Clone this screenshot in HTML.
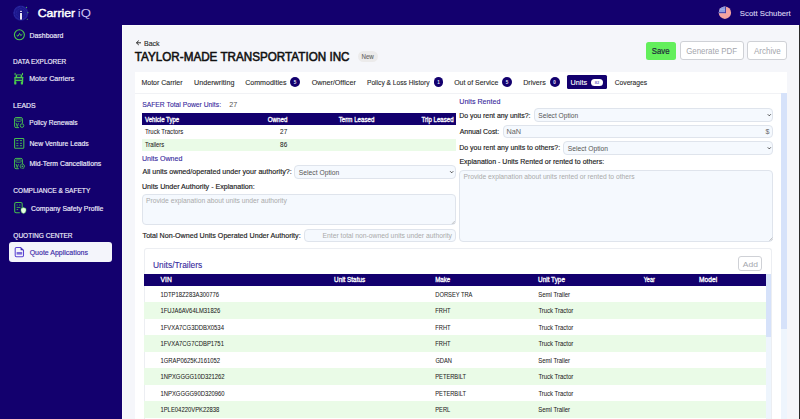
<!DOCTYPE html>
<html><head><meta charset="utf-8">
<title>Carrier iQ - Units</title>
<style>
*{box-sizing:border-box;margin:0;padding:0}
html,body{width:800px;height:419px;overflow:hidden}
body{background:#13006e;font-family:"Liberation Sans",sans-serif;position:relative}
.b{position:absolute}
#main{left:122px;top:25px;width:677px;height:394px;background:#f5f6fa;border-top:1px solid #fbfbfd;border-left:1px solid #fbfbfd}
#edge{left:799px;top:25px;width:1px;height:394px;background:#2a2a2a}
.card{background:#fff}
.badge{background:#13006e;border-radius:5px}
.inp{background:#f5f9fe;border:1px solid #dfe4ec;border-radius:4px}
.th{background:#13006e}
.green{background:#eafbe7}
.btn{background:#fff;border:1px solid #cfd1d6;border-radius:3px}
svg.ov{position:absolute;left:0;top:0;width:800px;height:419px;font-family:"Liberation Sans",sans-serif}
</style></head>
<body>
<!-- ======= SIDEBAR ======= -->
<nav class="b" style="left:0;top:0;width:122px;height:419px">
  <div class="b" style="left:8.6px;top:241.6px;width:103.9px;height:20.5px;background:#f4f5fb;border-radius:3px"></div>
</nav>

<!-- ======= MAIN ======= -->
<div id="main" class="b"></div>
<div id="edge" class="b"></div>

<!-- header buttons -->
<div class="b" style="left:357.9px;top:50.9px;width:20.1px;height:11.4px;background:#ecebeb;border-radius:6px"></div>
<div class="b" style="left:646px;top:41.5px;width:30px;height:18.5px;background:#63ef5b;border-radius:2.5px"></div>
<div class="b btn" style="left:680px;top:41px;width:63.5px;height:19.2px"></div>
<div class="b btn" style="left:747.2px;top:41px;width:39.6px;height:19.2px"></div>

<!-- main card -->
<div class="b card" style="left:134.5px;top:71.5px;width:652.5px;height:347.5px"></div>
<div class="b" style="left:134.5px;top:92.5px;width:646.5px;height:0.8px;background:#f1f2f5"></div>

<!-- tab badges -->
<div class="b badge" style="left:289.9px;top:77.4px;width:10.3px;height:9.2px"></div>
<div class="b badge" style="left:433.7px;top:77.4px;width:9.5px;height:9.2px"></div>
<div class="b badge" style="left:502px;top:77.4px;width:10px;height:9.2px"></div>
<div class="b badge" style="left:549.5px;top:77.4px;width:10px;height:9.2px"></div>
<div class="b" style="left:567px;top:75.1px;width:40px;height:13.9px;background:#13006e;border-radius:1.5px"></div>
<div class="b" style="left:590.7px;top:78.5px;width:12.5px;height:7.8px;background:#fff;border-radius:4px"></div>

<!-- outer scrollbar -->
<div class="b" style="left:781px;top:93px;width:6px;height:326px;background:#eef5fd"></div>
<div class="b" style="left:781px;top:93px;width:6px;height:235.5px;background:#d6e2fa"></div>

<!-- vehicle table -->
<div class="b th" style="left:142px;top:113.4px;width:313.7px;height:12px"></div>
<div class="b green" style="left:142px;top:138.5px;width:313.7px;height:12px"></div>

<!-- left inputs -->
<div class="b inp" style="left:294.2px;top:165.3px;width:161.5px;height:13.4px"></div>
<div class="b inp" style="left:141.8px;top:194.2px;width:313.9px;height:30.8px"></div>
<div class="b inp" style="left:303.8px;top:228.7px;width:151.9px;height:12.9px"></div>

<!-- right inputs -->
<div class="b inp" style="left:533.6px;top:108.3px;width:239.8px;height:13.4px"></div>
<div class="b inp" style="left:502.8px;top:124.9px;width:270.6px;height:13.1px"></div>
<div class="b inp" style="left:563.4px;top:141.4px;width:210px;height:13.2px"></div>
<div class="b inp" style="left:459px;top:170px;width:314.4px;height:71.6px"></div>

<!-- units/trailers card -->
<div class="b card" style="left:143.6px;top:247.9px;width:628.3px;height:171.1px;border:1px solid #eceef2;border-bottom:none;border-radius:3px 3px 0 0"></div>
<div class="b btn" style="left:738px;top:256.4px;width:24px;height:15.1px"></div>
<div class="b th" style="left:143.6px;top:274px;width:622.1px;height:11.6px"></div>
<div class="b green" style="left:143.6px;top:302.0px;width:622.1px;height:16.5px"></div>
<div class="b green" style="left:143.6px;top:335.0px;width:622.1px;height:16.5px"></div>
<div class="b green" style="left:143.6px;top:368.0px;width:622.1px;height:16.5px"></div>
<div class="b green" style="left:143.6px;top:401.0px;width:622.1px;height:16.5px"></div>
<!-- inner scrollbar -->
<div class="b" style="left:766.2px;top:273.7px;width:4.8px;height:145.3px;background:#eef5fd"></div>
<div class="b" style="left:766.2px;top:273.7px;width:4.8px;height:63.2px;background:#d6e2fa"></div>

<svg class="ov" viewBox="0 0 800 419">
<!-- logo -->
<g>
  <circle cx="20.8" cy="13.1" r="7.6" fill="#1c178c"/>
  <circle cx="20.8" cy="13.1" r="6.6" fill="none" stroke="#3936b4" stroke-width="1.2" stroke-dasharray="0.6 0.8" opacity="0.9"/>
  <circle cx="20.8" cy="13.1" r="4.4" fill="none" stroke="#3532b0" stroke-width="1" stroke-dasharray="0.6 0.9" opacity="0.7"/>
  <rect x="19.6" y="10.2" width="2.8" height="9.8" fill="#150d7a"/>
  <rect x="20.1" y="10.8" width="1.8" height="1.2" fill="#e9e6fb"/>
  <rect x="20.1" y="13" width="1.8" height="6.6" fill="#ffffff"/>
  <circle cx="26.6" cy="7.4" r="0.55" fill="#58c060"/>
  <circle cx="27.9" cy="12.6" r="0.55" fill="#58c060"/>
  <circle cx="27.3" cy="19.2" r="0.55" fill="#58c060"/>
</g>
<!-- dashboard icon -->
<g fill="none" stroke="#4cc94c" stroke-width="1.1">
  <circle cx="19.4" cy="34.8" r="5"/>
  <polyline points="16.6,35.2 18,36.2 19.6,33.4 20.8,35.6 22.4,34.2" stroke-width="1"/>
</g>
<!-- motor carriers truck icon -->
<g fill="#4ccb4c">
  <path fill-rule="evenodd" d="M15.6,75.4 Q15.6,74.4 16.6,74.4 H21.2 Q22.2,74.4 22.2,75.4 V77 H15.6 Z M17.1,75.3 H20.7 V76.9 H17.1 Z"/>
  <rect x="14.3" y="76.9" width="9.1" height="1.3"/>
  <rect x="14.4" y="78" width="1.3" height="4.2"/>
  <rect x="21.9" y="78" width="1.3" height="4.2"/>
  <rect x="15" y="79.8" width="7.6" height="1.3"/>
  <rect x="14.2" y="81.5" width="2.2" height="2.9" rx="0.4"/>
  <rect x="20.8" y="81.5" width="2.2" height="2.9" rx="0.4"/>
  <rect x="14.6" y="72.9" width="1" height="2.2"/>
  <rect x="22" y="72.9" width="1" height="2.2"/>
</g>
<rect x="15.7" y="78.2" width="6.2" height="1.6" fill="#2f6a5a" opacity="0.6"/>
<!-- policy renewals icon -->
<g fill="none" stroke="#46bb4f" stroke-width="1">
  <path d="M22.4,123.4 V119 Q22.4,117.5 20.9,117.5 H16.1 Q14.6,117.5 14.6,119 V126.2 Q14.6,127.6 16,127.6 H19"/>
  <rect x="15.9" y="119" width="5.2" height="2.3" rx="0.6" stroke-width="0.8"/>
  <path d="M16.1,123 L17.2,126.6 L18.5,123.2" stroke-width="0.9"/>
  <circle cx="22" cy="125.6" r="1.8" stroke-width="0.95"/>
</g>
<!-- new venture leads icon -->
<g fill="none" stroke="#46bb4f" stroke-width="1.05">
  <rect x="14.6" y="138.5" width="9.2" height="9.7" rx="0.8"/>
  <path d="M16.3,140.6 H18.4 M19.9,140.6 H22 M16.3,143.3 H18.4 M19.9,143.3 H22 M16.3,145.7 H18.4 M19.9,145.7 H22" stroke-width="0.9"/>
</g>
<!-- mid-term cancellations icon -->
<g fill="none" stroke="#46bb4f" stroke-width="1">
  <path d="M22.4,164 V159.8 Q22.4,158.4 20.9,158.4 H16.1 Q14.6,158.4 14.6,159.8 V167.2 Q14.6,168.7 16,168.7 H18.8"/>
  <rect x="15.9" y="159.9" width="5.2" height="2.3" rx="0.6" stroke-width="0.8"/>
  <path d="M16.1,164 L17.2,167.6 L18.5,164.2" stroke-width="0.9"/>
  <circle cx="22.3" cy="166.3" r="2.1" stroke-dasharray="0.9 0.45" stroke-width="1.1"/>
  <circle cx="22.3" cy="166.3" r="0.8" fill="#5ad35a" stroke="none"/>
</g>
<!-- company safety profile icon -->
<g fill="none" stroke="#46bb4f" stroke-width="1.05">
  <path d="M22.2,208 V203.8 Q22.2,202.5 20.8,202.5 H16.2 Q14.7,202.5 14.7,203.8 V211.6 Q14.7,212.8 16.2,212.8 H19.8"/>
  <path d="M16.6,205 H17.6 M19.2,205 H20.4 M16.6,207.4 H20.4 M16.6,209.6 H18.2" stroke-width="0.9"/>
</g>
<path d="M23.5,207.6 L26,208.6 V211 Q25.6,213 23.5,213.6 Q21.3,213 21,211 V208.6 Z" fill="#e8fbe4" stroke="#4cc94c" stroke-width="0.5"/>
<!-- quote applications icon -->
<g fill="none" stroke="#5b44d2" stroke-width="1.05">
  <path d="M15.2,248.6 Q15.2,247.4 16.4,247.4 H20.6 L23.5,250.3 V255.6 Q23.5,256.7 22.3,256.7 H16.4 Q15.2,256.7 15.2,255.6 Z"/>
</g>
<path d="M20.6,247.4 V250.3 H23.5 Z" fill="#3d2bb0"/>
<rect x="16.6" y="252" width="5.6" height="2.6" fill="#7b6bd8"/>
<!-- flag -->
<clipPath id="fc"><circle cx="724.9" cy="12.7" r="6.2"/></clipPath>
<g clip-path="url(#fc)">
  <rect x="718" y="6" width="14" height="14" fill="#f3a2a0"/>
  <rect x="718" y="6" width="7.6" height="7.2" fill="#8f9ee2"/>
  <rect x="718" y="12.2" width="7.9" height="0.9" fill="#3c3aa6"/>
  <rect x="725" y="6" width="0.9" height="7.1" fill="#3c3aa6"/>
  <rect x="718" y="9.2" width="7" height="0.6" fill="#b7c0f0" opacity="0.7"/>
</g>
<!-- back arrow -->
<path d="M141,42.8 H136.6 M138.8,40.6 L136.4,42.8 L138.8,45" fill="none" stroke="#222" stroke-width="0.95"/>
<!-- select chevrons -->
<g fill="none" stroke="#333" stroke-width="0.9">
  <polyline points="450.2,171.3 451.7,172.8 453.2,171.3"/>
  <polyline points="767.8,114.3 769.3,115.8 770.8,114.3"/>
  <polyline points="767.8,147.4 769.3,148.9 770.8,147.4"/>
</g>
<!-- textarea resize grips -->
<g stroke="#999" stroke-width="0.5">
  <path d="M451.8,224 L454.8,221 M453.4,224 L454.8,222.6"/>
  <path d="M769.4,240.6 L772.4,237.6 M771,240.6 L772.4,239.2"/>
</g>
<!-- badge numbers -->
<g font-size="4.6" fill="#e6e3fa" text-anchor="middle" font-weight="bold">
  <text x="295.05" y="83.7">5</text>
  <text x="438.45" y="83.7">1</text>
  <text x="507" y="83.7">5</text>
  <text x="554.5" y="83.7">0</text>
  <text x="596.95" y="83.9" fill="#7a70c8" font-size="4">82</text>
</g>
<text x="37.73" y="16.60" font-size="11.24" font-weight="normal" fill="#ffffff" stroke="#ffffff" stroke-width="0.45" textLength="37.33" lengthAdjust="spacingAndGlyphs">Carrier</text>
<text x="77.78" y="16.60" font-size="11.24" font-weight="normal" fill="#c9c2f2" textLength="13.20" lengthAdjust="spacingAndGlyphs">iQ</text>
<text x="29.56" y="37.60" font-size="7.40" font-weight="normal" fill="#f1effc" stroke="#f1effc" stroke-width="0.15" textLength="33.73" lengthAdjust="spacingAndGlyphs">Dashboard</text>
<text x="13.10" y="63.90" font-size="7.11" font-weight="normal" fill="#f1effc" stroke="#f1effc" stroke-width="0.15" textLength="53.23" lengthAdjust="spacingAndGlyphs">DATA EXPLORER</text>
<text x="29.25" y="81.20" font-size="7.11" font-weight="normal" fill="#f1effc" stroke="#f1effc" stroke-width="0.15" textLength="44.97" lengthAdjust="spacingAndGlyphs">Motor Carriers</text>
<text x="13.06" y="108.30" font-size="7.11" font-weight="normal" fill="#f1effc" stroke="#f1effc" stroke-width="0.15" textLength="22.63" lengthAdjust="spacingAndGlyphs">LEADS</text>
<text x="29.29" y="125.30" font-size="7.11" font-weight="normal" fill="#f1effc" stroke="#f1effc" stroke-width="0.15" textLength="48.32" lengthAdjust="spacingAndGlyphs">Policy Renewals</text>
<text x="29.47" y="146.00" font-size="7.11" font-weight="normal" fill="#f1effc" stroke="#f1effc" stroke-width="0.15" textLength="59.24" lengthAdjust="spacingAndGlyphs">New Venture Leads</text>
<text x="29.46" y="166.25" font-size="7.11" font-weight="normal" fill="#f1effc" stroke="#f1effc" stroke-width="0.15" textLength="71.75" lengthAdjust="spacingAndGlyphs">Mid-Term Cancellations</text>
<text x="13.29" y="192.80" font-size="7.11" font-weight="normal" fill="#f1effc" stroke="#f1effc" stroke-width="0.15" textLength="76.98" lengthAdjust="spacingAndGlyphs">COMPLIANCE &amp; SAFETY</text>
<text x="31.08" y="210.80" font-size="7.11" font-weight="normal" fill="#f1effc" stroke="#f1effc" stroke-width="0.15" textLength="72.20" lengthAdjust="spacingAndGlyphs">Company Safety Profile</text>
<text x="13.29" y="237.80" font-size="7.11" font-weight="normal" fill="#f1effc" stroke="#f1effc" stroke-width="0.15" textLength="59.33" lengthAdjust="spacingAndGlyphs">QUOTING CENTER</text>
<text x="29.67" y="254.70" font-size="7.11" font-weight="normal" fill="#3b2aa8" stroke="#3b2aa8" stroke-width="0.15" textLength="58.34" lengthAdjust="spacingAndGlyphs">Quote Applications</text>
<text x="739.86" y="15.50" font-size="7.97" font-weight="normal" fill="#dcd8f2" stroke="#dcd8f2" stroke-width="0.1" textLength="50.92" lengthAdjust="spacingAndGlyphs">Scott Schubert</text>
<text x="143.95" y="45.50" font-size="7.47" font-weight="normal" fill="#222" stroke="#222" stroke-width="0.1" textLength="15.69" lengthAdjust="spacingAndGlyphs">Back</text>
<text x="134.82" y="60.75" font-size="12.30" font-weight="normal" fill="#111" stroke="#111" stroke-width="0.55" textLength="214.69" lengthAdjust="spacingAndGlyphs">TAYLOR-MADE TRANSPORTATION INC</text>
<text x="361.42" y="58.80" font-size="6.40" font-weight="normal" fill="#666" stroke="#666" stroke-width="0.1" textLength="12.41" lengthAdjust="spacingAndGlyphs">New</text>
<text x="651.76" y="53.80" font-size="8.53" font-weight="normal" fill="#1e2a3a" stroke="#1e2a3a" stroke-width="0.2" textLength="17.76" lengthAdjust="spacingAndGlyphs">Save</text>
<text x="686.13" y="53.80" font-size="8.53" font-weight="normal" fill="#a4a6ad" textLength="51.03" lengthAdjust="spacingAndGlyphs">Generate PDF</text>
<text x="754.00" y="53.80" font-size="8.53" font-weight="normal" fill="#a4a6ad" textLength="26.72" lengthAdjust="spacingAndGlyphs">Archive</text>
<text x="141.46" y="84.70" font-size="6.97" font-weight="normal" fill="#2a2a2a" stroke="#2a2a2a" stroke-width="0.1" textLength="41.08" lengthAdjust="spacingAndGlyphs">Motor Carrier</text>
<text x="194.05" y="84.70" font-size="6.97" font-weight="normal" fill="#2a2a2a" stroke="#2a2a2a" stroke-width="0.1" textLength="40.35" lengthAdjust="spacingAndGlyphs">Underwriting</text>
<text x="245.17" y="84.70" font-size="6.97" font-weight="normal" fill="#2a2a2a" stroke="#2a2a2a" stroke-width="0.1" textLength="41.30" lengthAdjust="spacingAndGlyphs">Commodities</text>
<text x="311.66" y="84.70" font-size="6.97" font-weight="normal" fill="#2a2a2a" stroke="#2a2a2a" stroke-width="0.1" textLength="44.12" lengthAdjust="spacingAndGlyphs">Owner/Officer</text>
<text x="366.98" y="84.70" font-size="6.97" font-weight="normal" fill="#2a2a2a" stroke="#2a2a2a" stroke-width="0.1" textLength="62.52" lengthAdjust="spacingAndGlyphs">Policy &amp; Loss History</text>
<text x="454.17" y="84.70" font-size="6.97" font-weight="normal" fill="#2a2a2a" stroke="#2a2a2a" stroke-width="0.1" textLength="44.11" lengthAdjust="spacingAndGlyphs">Out of Service</text>
<text x="523.19" y="84.70" font-size="6.97" font-weight="normal" fill="#2a2a2a" stroke="#2a2a2a" stroke-width="0.1" textLength="22.53" lengthAdjust="spacingAndGlyphs">Drivers</text>
<text x="614.68" y="84.70" font-size="6.97" font-weight="normal" fill="#2a2a2a" stroke="#2a2a2a" stroke-width="0.1" textLength="32.53" lengthAdjust="spacingAndGlyphs">Coverages</text>
<text x="570.55" y="84.70" font-size="6.97" font-weight="normal" fill="#ffffff" stroke="#ffffff" stroke-width="0.1" textLength="16.48" lengthAdjust="spacingAndGlyphs">Units</text>
<text x="142.19" y="106.60" font-size="7.11" font-weight="normal" fill="#36279c" stroke="#36279c" stroke-width="0.1" textLength="78.82" lengthAdjust="spacingAndGlyphs">SAFER Total Power Units:</text>
<text x="229.26" y="106.60" font-size="7.11" font-weight="normal" fill="#555" textLength="8.03" lengthAdjust="spacingAndGlyphs">27</text>
<text x="145.00" y="122.00" font-size="6.54" font-weight="normal" fill="#fff" stroke="#fff" stroke-width="0.3" textLength="34.24" lengthAdjust="spacingAndGlyphs">Vehicle Type</text>
<text x="267.71" y="122.00" font-size="6.54" font-weight="normal" fill="#fff" stroke="#fff" stroke-width="0.3" textLength="19.64" lengthAdjust="spacingAndGlyphs">Owned</text>
<text x="338.80" y="122.00" font-size="6.54" font-weight="normal" fill="#fff" stroke="#fff" stroke-width="0.3" textLength="35.54" lengthAdjust="spacingAndGlyphs">Term Leased</text>
<text x="421.60" y="122.00" font-size="6.54" font-weight="normal" fill="#fff" stroke="#fff" stroke-width="0.3" textLength="31.94" lengthAdjust="spacingAndGlyphs">Trip Leased</text>
<text x="144.91" y="134.40" font-size="6.40" font-weight="normal" fill="#222" stroke="#222" stroke-width="0.05" textLength="38.28" lengthAdjust="spacingAndGlyphs">Truck Tractors</text>
<text x="280.14" y="134.40" font-size="6.40" font-weight="normal" fill="#222" stroke="#222" stroke-width="0.05" textLength="7.12" lengthAdjust="spacingAndGlyphs">27</text>
<text x="144.91" y="146.60" font-size="6.40" font-weight="normal" fill="#222" stroke="#222" stroke-width="0.05" textLength="19.27" lengthAdjust="spacingAndGlyphs">Trailers</text>
<text x="280.14" y="146.60" font-size="6.40" font-weight="normal" fill="#222" stroke="#222" stroke-width="0.05" textLength="7.12" lengthAdjust="spacingAndGlyphs">86</text>
<text x="141.96" y="161.00" font-size="6.83" font-weight="normal" fill="#36279c" stroke="#36279c" stroke-width="0.1" textLength="40.44" lengthAdjust="spacingAndGlyphs">Units Owned</text>
<text x="142.40" y="174.40" font-size="7.11" font-weight="normal" fill="#1b1b1b" stroke="#1b1b1b" stroke-width="0.15" textLength="149.24" lengthAdjust="spacingAndGlyphs">All units owned/operated under your authority?:</text>
<text x="298.79" y="174.90" font-size="7.11" font-weight="normal" fill="#555" textLength="40.49" lengthAdjust="spacingAndGlyphs">Select Option</text>
<text x="141.96" y="188.60" font-size="7.11" font-weight="normal" fill="#1b1b1b" stroke="#1b1b1b" stroke-width="0.15" textLength="112.68" lengthAdjust="spacingAndGlyphs">Units Under Authority - Explanation:</text>
<text x="145.97" y="203.20" font-size="7.11" font-weight="normal" fill="#aaaaaa" textLength="140.78" lengthAdjust="spacingAndGlyphs">Provide explanation about units under authority</text>
<text x="142.59" y="237.80" font-size="7.11" font-weight="normal" fill="#1b1b1b" stroke="#1b1b1b" stroke-width="0.15" textLength="158.05" lengthAdjust="spacingAndGlyphs">Total Non-Owned Units Operated Under Authority:</text>
<text x="322.47" y="237.80" font-size="7.11" font-weight="normal" fill="#aaaaaa" textLength="129.53" lengthAdjust="spacingAndGlyphs">Enter total non-owned units under authority</text>
<text x="459.26" y="104.00" font-size="7.11" font-weight="normal" fill="#36279c" stroke="#36279c" stroke-width="0.1" textLength="41.14" lengthAdjust="spacingAndGlyphs">Units Rented</text>
<text x="459.16" y="118.00" font-size="7.11" font-weight="normal" fill="#1b1b1b" stroke="#1b1b1b" stroke-width="0.15" textLength="71.27" lengthAdjust="spacingAndGlyphs">Do you rent any units?:</text>
<text x="538.29" y="118.30" font-size="7.11" font-weight="normal" fill="#555" textLength="39.88" lengthAdjust="spacingAndGlyphs">Select Option</text>
<text x="459.70" y="134.00" font-size="7.11" font-weight="normal" fill="#1b1b1b" stroke="#1b1b1b" stroke-width="0.15" textLength="39.52" lengthAdjust="spacingAndGlyphs">Annual Cost:</text>
<text x="506.43" y="134.00" font-size="7.11" font-weight="normal" fill="#666" textLength="14.67" lengthAdjust="spacingAndGlyphs">NaN</text>
<text x="765.50" y="134.00" font-size="7.11" font-weight="normal" fill="#666" textLength="3.97" lengthAdjust="spacingAndGlyphs">$</text>
<text x="459.15" y="150.40" font-size="7.11" font-weight="normal" fill="#1b1b1b" stroke="#1b1b1b" stroke-width="0.15" textLength="100.98" lengthAdjust="spacingAndGlyphs">Do you rent any units to others?:</text>
<text x="567.79" y="150.70" font-size="7.11" font-weight="normal" fill="#555" textLength="40.19" lengthAdjust="spacingAndGlyphs">Select Option</text>
<text x="459.45" y="164.00" font-size="7.11" font-weight="normal" fill="#1b1b1b" stroke="#1b1b1b" stroke-width="0.15" textLength="144.68" lengthAdjust="spacingAndGlyphs">Explanation - Units Rented or rented to others:</text>
<text x="463.48" y="179.30" font-size="7.11" font-weight="normal" fill="#aaaaaa" textLength="171.13" lengthAdjust="spacingAndGlyphs">Provide explanation about units rented or rented to others</text>
<text x="152.97" y="267.60" font-size="9.10" font-weight="normal" fill="#36279c" stroke="#36279c" stroke-width="0.1" textLength="49.29" lengthAdjust="spacingAndGlyphs">Units/Trailers</text>
<text x="742.80" y="266.90" font-size="7.40" font-weight="normal" fill="#a4a6ad" textLength="15.08" lengthAdjust="spacingAndGlyphs">Add</text>
<text x="160.60" y="282.30" font-size="6.69" font-weight="normal" fill="#fff" stroke="#fff" stroke-width="0.3" textLength="11.14" lengthAdjust="spacingAndGlyphs">VIN</text>
<text x="334.10" y="282.30" font-size="6.69" font-weight="normal" fill="#fff" stroke="#fff" stroke-width="0.3" textLength="30.99" lengthAdjust="spacingAndGlyphs">Unit Status</text>
<text x="435.22" y="282.30" font-size="6.69" font-weight="normal" fill="#fff" stroke="#fff" stroke-width="0.3" textLength="15.03" lengthAdjust="spacingAndGlyphs">Make</text>
<text x="538.10" y="282.30" font-size="6.69" font-weight="normal" fill="#fff" stroke="#fff" stroke-width="0.3" textLength="26.86" lengthAdjust="spacingAndGlyphs">Unit Type</text>
<text x="643.71" y="282.30" font-size="6.69" font-weight="normal" fill="#fff" stroke="#fff" stroke-width="0.3" textLength="11.11" lengthAdjust="spacingAndGlyphs">Year</text>
<text x="699.08" y="282.30" font-size="6.69" font-weight="normal" fill="#fff" stroke="#fff" stroke-width="0.3" textLength="18.05" lengthAdjust="spacingAndGlyphs">Model</text>
<text x="160.43" y="296.70" font-size="6.54" font-weight="normal" fill="#222" stroke="#222" stroke-width="0.05" textLength="58.61" lengthAdjust="spacingAndGlyphs">1DTP18Z283A300776</text>
<text x="435.25" y="296.70" font-size="6.54" font-weight="normal" fill="#222" stroke="#222" stroke-width="0.05" textLength="37.22" lengthAdjust="spacingAndGlyphs">DORSEY TRA</text>
<text x="538.31" y="296.70" font-size="6.54" font-weight="normal" fill="#222" stroke="#222" stroke-width="0.05" textLength="31.71" lengthAdjust="spacingAndGlyphs">Semi Trailer</text>
<text x="160.43" y="313.20" font-size="6.54" font-weight="normal" fill="#222" stroke="#222" stroke-width="0.05" textLength="59.80" lengthAdjust="spacingAndGlyphs">1FUJA6AV64LM31826</text>
<text x="435.25" y="313.20" font-size="6.54" font-weight="normal" fill="#222" stroke="#222" stroke-width="0.05" textLength="15.26" lengthAdjust="spacingAndGlyphs">FRHT</text>
<text x="538.41" y="313.20" font-size="6.54" font-weight="normal" fill="#222" stroke="#222" stroke-width="0.05" textLength="34.78" lengthAdjust="spacingAndGlyphs">Truck Tractor</text>
<text x="160.43" y="329.70" font-size="6.54" font-weight="normal" fill="#222" stroke="#222" stroke-width="0.05" textLength="63.50" lengthAdjust="spacingAndGlyphs">1FVXA7CG3DDBX0534</text>
<text x="435.25" y="329.70" font-size="6.54" font-weight="normal" fill="#222" stroke="#222" stroke-width="0.05" textLength="15.26" lengthAdjust="spacingAndGlyphs">FRHT</text>
<text x="538.41" y="329.70" font-size="6.54" font-weight="normal" fill="#222" stroke="#222" stroke-width="0.05" textLength="34.78" lengthAdjust="spacingAndGlyphs">Truck Tractor</text>
<text x="160.43" y="346.20" font-size="6.54" font-weight="normal" fill="#222" stroke="#222" stroke-width="0.05" textLength="63.50" lengthAdjust="spacingAndGlyphs">1FVXA7CG7CDBP1751</text>
<text x="435.25" y="346.20" font-size="6.54" font-weight="normal" fill="#222" stroke="#222" stroke-width="0.05" textLength="15.26" lengthAdjust="spacingAndGlyphs">FRHT</text>
<text x="538.41" y="346.20" font-size="6.54" font-weight="normal" fill="#222" stroke="#222" stroke-width="0.05" textLength="34.78" lengthAdjust="spacingAndGlyphs">Truck Tractor</text>
<text x="160.43" y="362.70" font-size="6.54" font-weight="normal" fill="#222" stroke="#222" stroke-width="0.05" textLength="59.59" lengthAdjust="spacingAndGlyphs">1GRAP0625KJ161052</text>
<text x="435.43" y="362.70" font-size="6.54" font-weight="normal" fill="#222" stroke="#222" stroke-width="0.05" textLength="16.54" lengthAdjust="spacingAndGlyphs">GDAN</text>
<text x="538.31" y="362.70" font-size="6.54" font-weight="normal" fill="#222" stroke="#222" stroke-width="0.05" textLength="31.71" lengthAdjust="spacingAndGlyphs">Semi Trailer</text>
<text x="160.43" y="379.20" font-size="6.54" font-weight="normal" fill="#222" stroke="#222" stroke-width="0.05" textLength="64.16" lengthAdjust="spacingAndGlyphs">1NPXGGGG10D321262</text>
<text x="435.25" y="379.20" font-size="6.54" font-weight="normal" fill="#222" stroke="#222" stroke-width="0.05" textLength="30.75" lengthAdjust="spacingAndGlyphs">PETERBILT</text>
<text x="538.41" y="379.20" font-size="6.54" font-weight="normal" fill="#222" stroke="#222" stroke-width="0.05" textLength="34.78" lengthAdjust="spacingAndGlyphs">Truck Tractor</text>
<text x="160.43" y="395.70" font-size="6.54" font-weight="normal" fill="#222" stroke="#222" stroke-width="0.05" textLength="64.16" lengthAdjust="spacingAndGlyphs">1NPXGGGG90D320960</text>
<text x="435.25" y="395.70" font-size="6.54" font-weight="normal" fill="#222" stroke="#222" stroke-width="0.05" textLength="30.75" lengthAdjust="spacingAndGlyphs">PETERBILT</text>
<text x="538.41" y="395.70" font-size="6.54" font-weight="normal" fill="#222" stroke="#222" stroke-width="0.05" textLength="34.78" lengthAdjust="spacingAndGlyphs">Truck Tractor</text>
<text x="160.43" y="412.20" font-size="6.54" font-weight="normal" fill="#222" stroke="#222" stroke-width="0.05" textLength="58.94" lengthAdjust="spacingAndGlyphs">1PLE04220VPK22838</text>
<text x="435.25" y="412.20" font-size="6.54" font-weight="normal" fill="#222" stroke="#222" stroke-width="0.05" textLength="14.96" lengthAdjust="spacingAndGlyphs">PERL</text>
<text x="538.31" y="412.20" font-size="6.54" font-weight="normal" fill="#222" stroke="#222" stroke-width="0.05" textLength="31.71" lengthAdjust="spacingAndGlyphs">Semi Trailer</text>
</svg>
</body></html>
